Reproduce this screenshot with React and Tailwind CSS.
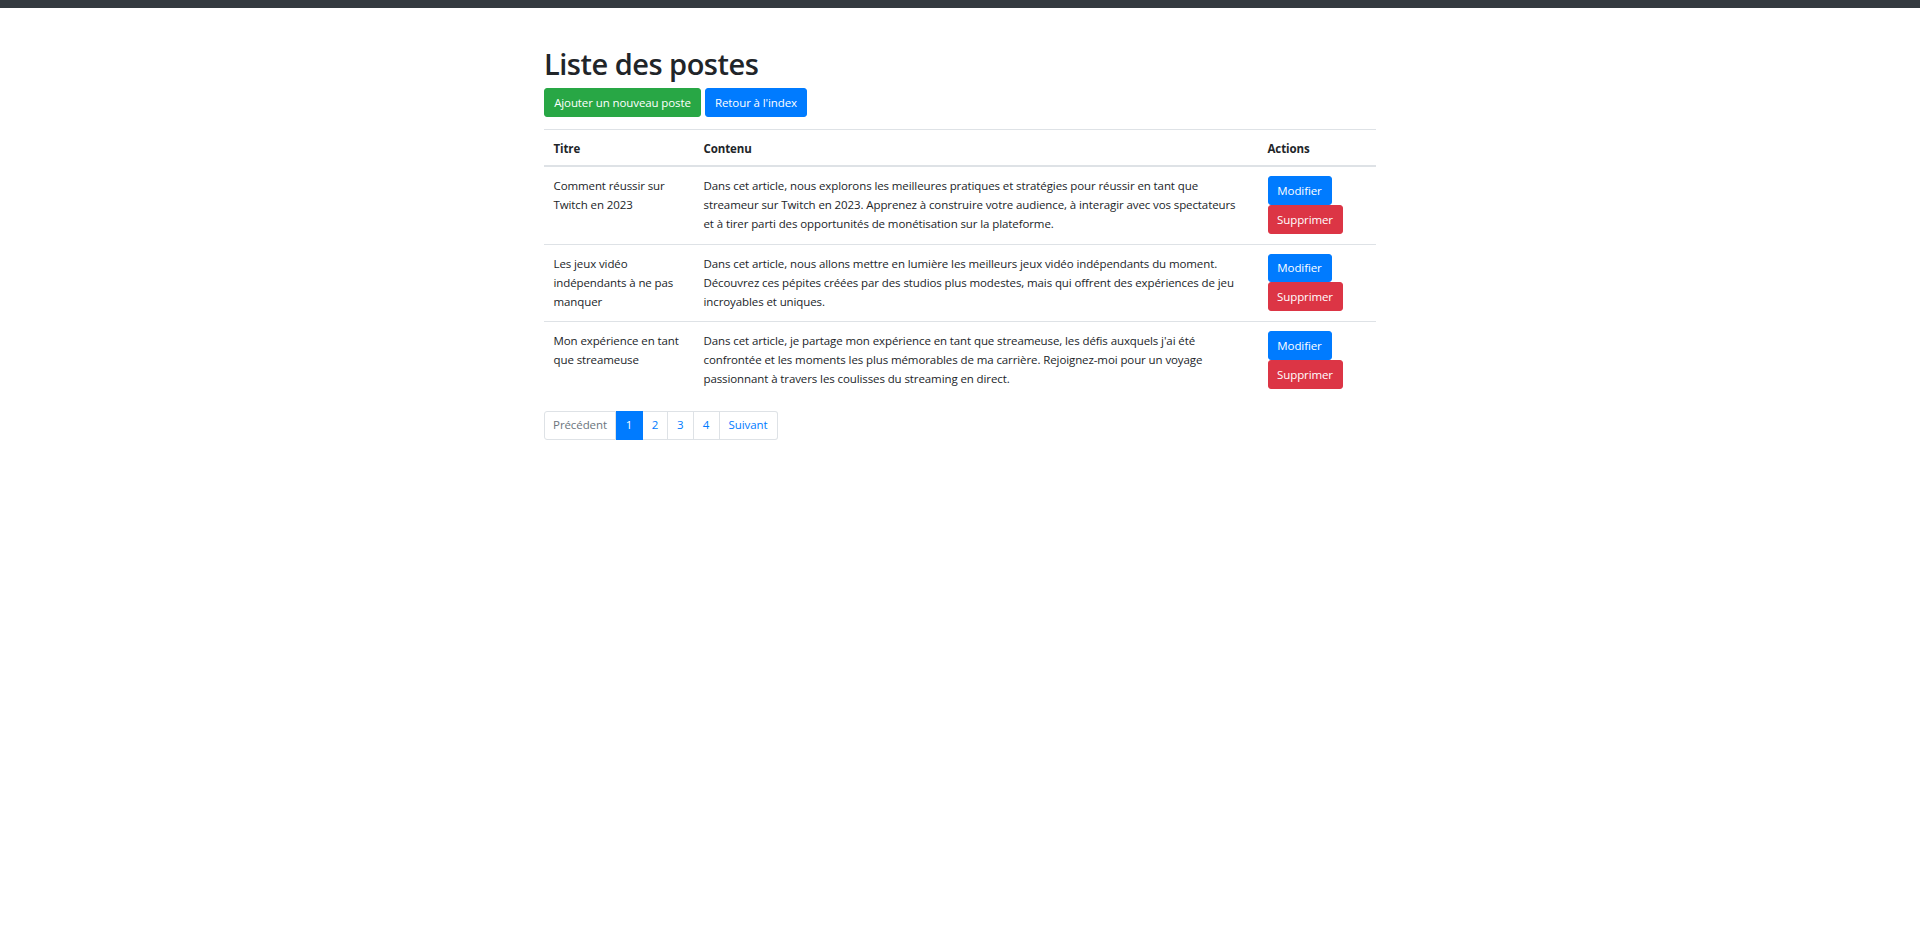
const POSTS = [
  {
    title: ["Comment réussir sur", "Twitch en 2023"],
    content: [
      "Dans cet article, nous explorons les meilleures pratiques et stratégies pour réussir en tant que",
      "streameur sur Twitch en 2023. Apprenez à construire votre audience, à interagir avec vos spectateurs",
      "et à tirer parti des opportunités de monétisation sur la plateforme.",
    ],
  },
  {
    title: ["Les jeux vidéo", "indépendants à ne pas", "manquer"],
    content: [
      "Dans cet article, nous allons mettre en lumière les meilleurs jeux vidéo indépendants du moment.",
      "Découvrez ces pépites créées par des studios plus modestes, mais qui offrent des expériences de jeu",
      "incroyables et uniques.",
    ],
  },
  {
    title: ["Mon expérience en tant", "que streameuse"],
    content: [
      "Dans cet article, je partage mon expérience en tant que streameuse, les défis auxquels j'ai été",
      "confrontée et les moments les plus mémorables de ma carrière. Rejoignez-moi pour un voyage",
      "passionnant à travers les coulisses du streaming en direct.",
    ],
  },
];

const PAGES = [
  { label: "Précédent", w: "w-[72px]", kind: "disabled" },
  { label: "1", w: "w-[27px]", kind: "active" },
  { label: "2", w: "w-[25px]", kind: "link" },
  { label: "3", w: "w-[25.5px]", kind: "link" },
  { label: "4", w: "w-[26px]", kind: "link" },
  { label: "Suivant", w: "w-[58px]", kind: "link" },
];

function Lines({ lines }) {
  return lines.map((l, i) => (
    <span key={i} className="block whitespace-nowrap">
      {l}
    </span>
  ));
}

export default function App() {
  return (
    <div className="min-h-screen bg-white font-['Open_Sans',sans-serif] text-[#212529]">
      {/* top strip */}
      <div className="h-2 bg-[#343a40]" />

      <div className="mx-auto w-[832px] pt-[37px]">
        <h1 className="mb-[5px] text-[29px] font-semibold leading-[38px] tracking-[-0.5px]">Liste des postes</h1>

        <div className="flex gap-1 text-[11.5px] tracking-[-0.1px]">
          <button className="flex h-[29px] w-[157px] items-center justify-center rounded-[3px] border border-[#28a745] bg-[#28a745] text-white">
            Ajouter un nouveau poste
          </button>
          <button className="flex h-[29px] w-[102px] items-center justify-center rounded-[3px] border border-[#007bff] bg-[#007bff] text-white">
            Retour à l'index
          </button>
        </div>

        <table className="mt-[12px] w-full table-fixed border-collapse text-[11.5px] leading-[19px] tracking-[-0.1px]">
          <colgroup>
            <col className="w-[150px]" />
            <col className="w-[564px]" />
            <col className="w-[118px]" />
          </colgroup>
          <thead>
            <tr>
              <th className="border-t border-b-2 border-[#dee2e6] px-[9.5px] pt-[9px] pb-[7px] text-left font-bold">Titre</th>
              <th className="border-t border-b-2 border-[#dee2e6] px-[9.5px] pt-[9px] pb-[7px] text-left font-bold">Contenu</th>
              <th className="border-t border-b-2 border-[#dee2e6] px-[9.5px] pt-[9px] pb-[7px] text-left font-bold">Actions</th>
            </tr>
          </thead>
          <tbody>
            {POSTS.map((p, i) => (
              <tr key={i}>
                <td className={`${i ? "border-t border-[#dee2e6]" : ""} px-[9.5px] pt-[9px] pb-[10px] align-top`}>
                  <Lines lines={p.title} />
                </td>
                <td className={`${i ? "border-t border-[#dee2e6]" : ""} px-[9.5px] pt-[9px] pb-[10px] align-top`}>
                  <Lines lines={p.content} />
                </td>
                <td className={`${i ? "border-t border-[#dee2e6]" : ""} px-[9.5px] pt-[9px] pb-[10px] align-top`}>
                  <div className="flex flex-col items-start">
                    <button className="flex h-[28.5px] w-[64px] items-center justify-center rounded-[3px] border border-[#007bff] bg-[#007bff] text-white">
                      Modifier
                    </button>
                    <button className="flex h-[29px] w-[75px] items-center justify-center rounded-[3px] border border-[#dc3545] bg-[#dc3545] text-white">
                      Supprimer
                    </button>
                  </div>
                </td>
              </tr>
            ))}
          </tbody>
        </table>

        <nav className="mt-[12px] flex text-[11.5px] tracking-[-0.1px]">
          {PAGES.map((pg, i) => (
            <span
              key={pg.label}
              className={`flex h-[29px] ${pg.w} items-center justify-center border ${i ? "border-l-0" : ""} ${
                i === 0 ? "rounded-l-[3px]" : ""
              } ${i === PAGES.length - 1 ? "rounded-r-[3px]" : ""} ${
                pg.kind === "active"
                  ? "border-[#007bff] bg-[#007bff] text-white"
                  : pg.kind === "disabled"
                  ? "border-[#dee2e6] bg-white text-[#6c757d]"
                  : "border-[#dee2e6] bg-white text-[#007bff]"
              }`}
            >
              {pg.label}
            </span>
          ))}
        </nav>
      </div>
    </div>
  );
}
